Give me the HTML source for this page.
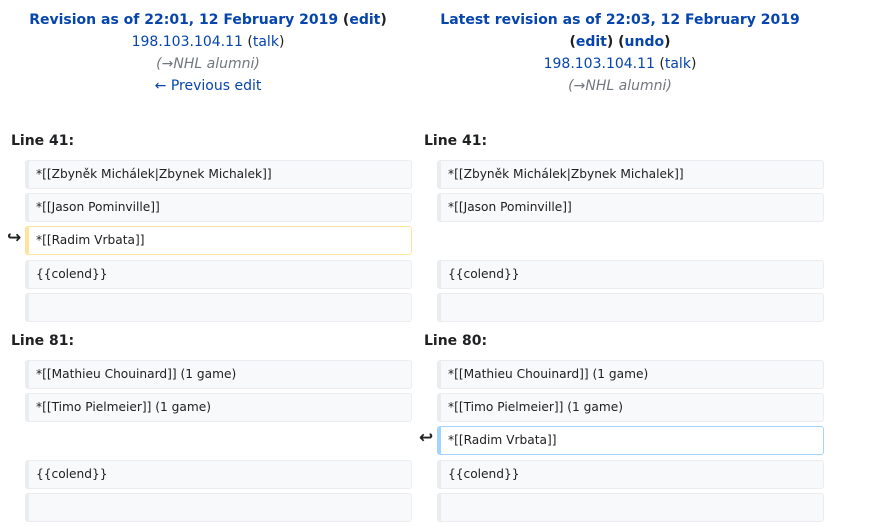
<!DOCTYPE html>
<html><head><meta charset="utf-8"><style>
body{margin:0;width:874px;height:526px;background:#fff;font-family:"DejaVu Sans","Liberation Sans",sans-serif;color:#202122;position:relative;overflow:hidden}
.h{position:absolute;text-align:center;font-size:14px;line-height:22px}
.h b{font-weight:bold}
a{color:#0645ad;text-decoration:none}
.g{color:#72777d;font-style:italic}
.ln{position:absolute;font-weight:bold;font-size:14px}
.c{position:absolute;box-sizing:border-box;height:29px;width:387px;background:#f8f9fa;border:1px solid #eaecf0;border-left:4px solid #eaecf0;border-radius:3px;font-size:12.2px;line-height:27px;padding-left:7px}
.y{background:#fff;border-color:#ffe49c}
.bl{background:#fff;border-color:#a3d3ff}
.m{position:absolute;font-size:17px;font-weight:bold}
</style></head><body>
<div class="h" style="left:0;width:416px;top:9px"><b><a>Revision as of 22:01, 12 February 2019</a> (<a>edit</a>)</b><br><a>198.103.104.11</a> (<a>talk</a>)<br><span class="g">(→NHL alumni)</span><br><a>← Previous edit</a></div>
<div class="h" style="left:412px;width:416px;top:9px"><b><a>Latest revision as of 22:03, 12 February 2019</a></b><br><b>(<a>edit</a>) (<a>undo</a>)</b><br><a>198.103.104.11</a> (<a>talk</a>)<br><span class="g">(→NHL alumni)</span></div>

<div class="ln" style="left:11px;top:133px">Line 41:</div>
<div class="ln" style="left:424px;top:133px">Line 41:</div>
<div class="ln" style="left:11px;top:333px">Line 81:</div>
<div class="ln" style="left:424px;top:333px">Line 80:</div>

<div class="c" style="left:25px;top:160px">*[[Zbyněk Michálek|Zbynek Michalek]]</div>
<div class="c" style="left:25px;top:193px">*[[Jason Pominville]]</div>
<div class="c y" style="left:25px;top:226px">*[[Radim Vrbata]]</div>
<div class="m" style="left:7px;top:228px">↪</div>
<div class="c" style="left:25px;top:260px">{{colend}}</div>
<div class="c" style="left:25px;top:293px"></div>

<div class="c" style="left:437px;top:160px">*[[Zbyněk Michálek|Zbynek Michalek]]</div>
<div class="c" style="left:437px;top:193px">*[[Jason Pominville]]</div>
<div class="c" style="left:437px;top:260px">{{colend}}</div>
<div class="c" style="left:437px;top:293px"></div>

<div class="c" style="left:25px;top:360px">*[[Mathieu Chouinard]] (1 game)</div>
<div class="c" style="left:25px;top:393px">*[[Timo Pielmeier]] (1 game)</div>
<div class="c" style="left:25px;top:460px">{{colend}}</div>
<div class="c" style="left:25px;top:493px"></div>

<div class="c" style="left:437px;top:360px">*[[Mathieu Chouinard]] (1 game)</div>
<div class="c" style="left:437px;top:393px">*[[Timo Pielmeier]] (1 game)</div>
<div class="c bl" style="left:437px;top:426px">*[[Radim Vrbata]]</div>
<div class="m" style="left:419px;top:428px">↩</div>
<div class="c" style="left:437px;top:460px">{{colend}}</div>
<div class="c" style="left:437px;top:493px"></div>
</body></html>
